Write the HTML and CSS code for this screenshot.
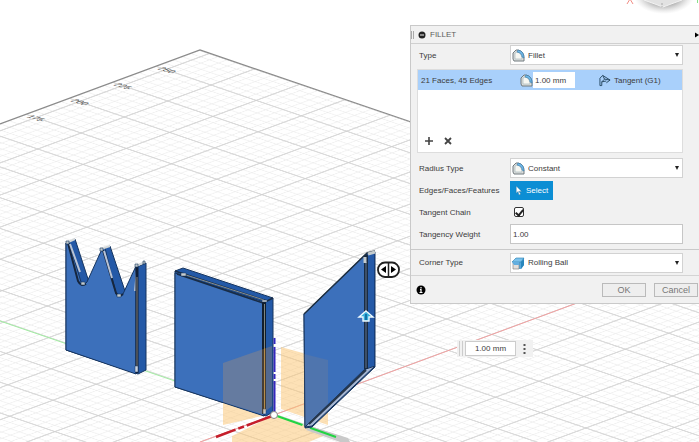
FILE: index.html
```html
<!DOCTYPE html>
<html lang="en">
<head>
<meta charset="utf-8">
<title>Fillet</title>
<link rel="stylesheet" href="styles.css">
</head>
<body>
<main class="viewport">
<svg class="scene" viewBox="0 0 699 442" preserveAspectRatio="xMinYMin slice" aria-hidden="true">
  <defs>
    <pattern id="grid" width="5" height="5" patternUnits="userSpaceOnUse" patternTransform="matrix(9.04 3.08 -8.66 3.2 211 85)">
      <path d="M1 0V5M2 0V5M3 0V5M4 0V5M0 1H5M0 2H5M0 3H5M0 4H5" stroke="#ececec" stroke-width=".1"/>
      <path d="M0 0H5M0 5H5M0 0V5M5 0V5" stroke="#d0d0d0" stroke-width=".16" fill="none"/>
    </pattern>
    <radialGradient id="shade"><stop offset=".5" stop-color="#999" stop-opacity=".8"/><stop offset="1" stop-color="#ccc" stop-opacity="0"/></radialGradient>
  </defs>
  <path d="M200 50L0 124V442H699V221Z" fill="url(#grid)"/>
  <path d="M0 124L200 50L420 125" fill="none" stroke="#8a8a8a" stroke-width="1.2"/>
  <g class="scale">
    <text transform="matrix(.94 .3 -.94 .35 157 69)">250</text>
    <text transform="matrix(.94 .3 -.94 .35 113 85)">225</text>
    <text transform="matrix(.94 .3 -.94 .35 70 101)">200</text>
    <text transform="matrix(.94 .3 -.94 .35 26 117)">175</text>
  </g>
  <path d="M0 321L309 427" stroke="#a2eda2"/>
  <path d="M200 442L274 415L577 303" stroke="#f2a0a0" fill="none"/>
  <ellipse cx="664" cy="-4" rx="30" ry="18" fill="url(#shade)"/>
  <path d="M643 -8L644 0L663 7L682 0L683 -8Z" fill="#e2e2e2" stroke="#f2f2f2"/>
  <path d="M662 3v2M662 6v1" stroke="#aaa"/>
  <path d="M627 4l3 -5l3 5" fill="none" stroke="#f08c84"/><path d="M697.500 0v3" stroke="#8ae08a"/>

  <path d="M281 347L328 360V425L281 409Z" fill="#fbc36d" fill-opacity=".5"/>
  <path d="M232 436L274 415L328 434L309 442H232Z" fill="#fbc36d" fill-opacity=".5"/>
  <path d="M310 426L348 438L350 442H340L306 430Z" fill="#c9c9c9"/>

  <g stroke="#163560" stroke-width="1" stroke-linejoin="round">
    <path d="M66 243L75 239L89 282L103 249L110 246L125 291L137 267L146 263V370L138 374L66 350Z" fill="#2459a7"/>
    <path d="M66 243L69 242L81 282Q83 287 87 282L102 249L105 248L116 294Q119 299 123 294L136 266V374L66 350Z" fill="#3c70bb"/>
    <path d="M68 243L78 281Q81 287 86 284M103 250L116 293Q119 298 123 294" fill="none" stroke="#16263e" stroke-width="2"/>
    <path d="M70 244L80 272M104 251L112 278M137 270L135 291" stroke="#b8c3d5" stroke-width="2"/>
    <path d="M137 267V373" stroke="#101e35" stroke-width="3"/>
    <path d="M137 277V371" stroke="#86827a" stroke-width="1"/>
    <path d="M66 243L75 239M101 249L110 246M136 266L145 262" stroke="#d4d9db" stroke-width="2"/>
    <path d="M66 241h3v3h-3zM100 248h3v3h-3zM135 264h3v3h-3zM143 261h2v3h-2zM81 282h4v3h-4zM117 294h4v3h-4z" fill="#c3cacd" stroke-width=".6"/>
    <path d="M135 366h3v6h-3z" fill="#ccd3de" stroke-width=".5"/>
  </g>
  <g stroke="#18365f" stroke-linejoin="round">
    <path d="M175 271L183 268L273 298V412L266 416L175 387Z" fill="#2359a7"/>
    <path d="M175 273L264 302V416L175 387Z" fill="#3c70bb"/>
    <path d="M175 271L267 301L273 298M177 274L263 303" fill="none" stroke="#182c46" stroke-width="1.5"/>
    <path d="M183 274L264 300" stroke="#a4aaa4" stroke-width=".8"/>
    <path d="M264 301V414" stroke="#111d2c" stroke-width="4"/>
    <path d="M264.500 304V348" stroke="#7d8580"/>
    <path d="M264.500 348V410" stroke="#a78a4b"/>
    <path d="M181 273h5v3h-5zM262 300h5v2h-5zM263 409h3v5h-3z" fill="#c6cdd1" stroke-width=".5"/>
    <path d="M223 363L272 346V406L262 414L223 402Z" fill="#df9d4f" fill-opacity=".25" stroke="none"/>
    <path d="M223 403L262 416L223 425Z" fill="#fbc36d" fill-opacity=".5" stroke="none"/>
  </g>
  <path d="M274.500 338V415" stroke="#3327bd" stroke-width="2" stroke-dasharray="6 3 25 2 5 2 40"/>
  <path d="M272 416L216 437" stroke="#c51e2b" stroke-width="2.500" stroke-dasharray="27 3 6 3"/>
  <path d="M277 416L336 437" stroke="#22d443" stroke-width="2" stroke-dasharray="27 8 30"/>
  <circle cx="274" cy="415" r="3.500" fill="#fff" stroke="#878787"/>

  <g stroke="#18365f" stroke-linejoin="round">
    <path d="M304 314L367 254L375 252V367L312 427L305 428Z" fill="#2459a7"/>
    <path d="M304 314L366 254V368L305 427Z" fill="#3c70bb"/>
    <path d="M304 354L328 360V404L305 427Z" fill="#df9d4f" fill-opacity=".12" stroke="none"/>
    <path d="M305 427L366 369L375 366L312 426Z" fill="#a5b6d3"/>
    <path d="M309 424L366 370" stroke="#26364b" stroke-width="2"/>
    <path d="M366 255V369" stroke="#182b44" stroke-width="4"/>
    <path d="M366 262V368" stroke="#63758a"/>
    <path d="M304 314L367 253L375 251" fill="none" stroke="#1f3042" stroke-width="1.500"/>
    <path d="M368 254L375 252M365 257v6" stroke="#c5ccce" stroke-width="3"/>
    <path d="M374.500 254V366" stroke="#173d78"/>
  </g>
  <path d="M366 311L373 317H369V321H363V317H359Z" fill="#39b0db" stroke="#eefaff" stroke-width="1.400"/>
  <path d="M366 314V320" stroke="#1475aa" stroke-width="2"/>
  <rect x="378" y="262.500" width="21" height="14.500" rx="7" fill="#fff" stroke="#202020" stroke-width="1.800"/>
  <path d="M388.500 263V277" stroke="#222" stroke-width="1.500"/><path d="M386 266v7l-5-3.500zM391 266v7l5-3.500z"/>
</svg>

<form class="dialog">
  <svg class="symbols" aria-hidden="true">
    <symbol id="fillet" viewBox="0 0 13 13"><path d="M4 1H6Q12 2 12 9V12H2L1 10V4Z" fill="#dedfdc" stroke="#717b80"/><path d="M3 4L5 3Q10 4 10 10H3Z" fill="#f7f7f2" stroke="#a8b8be" stroke-width=".7"/><path d="M6 1Q12 2 12 9L10 8Q10 4 5 3Z" fill="#6eb7e8" stroke="#397ba7" stroke-width=".6"/></symbol>
  </svg>
  <header class="titlebar">
    <span class="grip"></span>
    <svg class="dot" viewBox="0 0 8 8" aria-hidden="true"><circle cx="4" cy="4" r="3.500" fill="#222"/><path d="M2 4H6" stroke="#eee"/></svg>
    <h1>FILLET</h1>
    <svg class="expand" viewBox="0 0 5 6" aria-hidden="true"><path d="M0 0L5 3L0 6Z"/></svg>
  </header>
  <div class="row">
    <label for="type">Type</label>
    <div class="drop"><svg aria-hidden="true"><use href="#fillet"/></svg><select id="type"><option>Fillet</option></select></div>
  </div>
  <section class="selection">
    <div class="entry">
      <span>21 Faces, 45 Edges</span>
      <div class="radius"><svg aria-hidden="true"><use href="#fillet"/></svg><input aria-label="Radius" value="1.00 mm"></div>
      <div class="tangent"><svg viewBox="0 0 13 13" aria-hidden="true"><path d="M1 12V4L4 1L6 5L3 8V12ZM4 1L12 6L8 9M6 5L12 6M3 8L8 7" fill="none" stroke="#25455e"/></svg>Tangent (G1)</div>
    </div>
    <div class="tools">
      <button type="button" aria-label="Add"><svg viewBox="0 0 8 8"><path d="M4 0V8M0 4H8" stroke="#444" stroke-width="1.600"/></svg></button>
      <button type="button" aria-label="Remove"><svg viewBox="0 0 8 8"><path d="M1 1L7 7M7 1L1 7" stroke="#444" stroke-width="1.800"/></svg></button>
    </div>
  </section>
  <div class="row">
    <label for="radius-type">Radius Type</label>
    <div class="drop"><svg aria-hidden="true"><use href="#fillet"/></svg><select id="radius-type"><option>Constant</option></select></div>
  </div>
  <div class="row">
    <label for="pick">Edges/Faces/Features</label>
    <button class="pick" id="pick" type="button"><svg viewBox="0 0 7 10" aria-hidden="true"><path d="M1 0V8L3 6L4 10L6 9L4 6H7Z" fill="#fff" stroke="#246b91" stroke-width=".4"/></svg>Select</button>
  </div>
  <div class="row">
    <label for="chain">Tangent Chain</label>
    <input class="check" id="chain" type="checkbox" checked>
  </div>
  <div class="row">
    <label for="weight">Tangency Weight</label>
    <input class="field" id="weight" value="1.00">
  </div>
  <div class="row corner">
    <label for="corner">Corner Type</label>
    <div class="drop"><svg viewBox="0 0 13 13" aria-hidden="true"><path d="M1 6L4 1H12V8L9 12H1Z" fill="#55a8dc"/><path d="M1 6H7V12H1Z" fill="#e2dfdc" stroke="#777" stroke-width=".6"/><path d="M0 5L4 1H12L9 5Z" fill="#7cc2ec" stroke="#267daf" stroke-width=".6"/><path d="M9 5L12 2V8L9 12Z" fill="#2986bd"/><path d="M0 5H7V8H2Z" fill="#62aee0"/></svg><select id="corner"><option>Rolling Ball</option></select></div>
  </div>
  <footer class="actions">
    <svg class="info" viewBox="0 0 10 10" role="img" aria-label="Information"><circle cx="5" cy="5" r="4.500"/><path d="M5 2V3.500M4 4.500H5V7.500M3.500 7.500H6.500" stroke="#fff" stroke-width="1.200" fill="none"/></svg>
    <button type="button">OK</button><button type="button">Cancel</button>
  </footer>
</form>

<div class="value">
  <span class="handle"></span><input aria-label="Fillet radius" value="1.00 mm">
  <button type="button" aria-label="More"><svg viewBox="0 0 3 10"><path d="M1.500 0V2M1.500 4V6M1.500 8V10" stroke="#555" stroke-width="2"/></svg></button>
</div>
</main>
</body>
</html>
```

FILE: styles.css
```css
* { box-sizing: border-box; }
body { margin: 0; background: #fff; color: #3c3c3c; font-family: "Liberation Sans", Arial, sans-serif; font-size: 8px; }
button, input, select { font: inherit; color: inherit; margin: 0; padding: 0; border-radius: 0; }
.viewport { position: relative; min-height: 100vh; overflow: hidden; }
.scene { position: absolute; inset: 0; width: 100%; height: 100%; }
.scale text { font-size: 9px; fill: #444; }
.symbols { position: absolute; width: 0; height: 0; }

.dialog { position: absolute; top: 25px; left: 410px; right: 0; background: #f1f1f1; border: 1px solid #c9c9c9; border-right: 0; }
.titlebar { display: flex; align-items: center; gap: 4px; height: 18px; border-bottom: 1px solid #d0d0d0; }
.titlebar h1 { flex: 1; margin: 0; font-size: 8px; font-weight: normal; color: #5c5c5c; }
.grip { width: 3px; height: 8px; border-left: 1px solid #aaa; border-right: 1px solid #aaa; }
.dot { width: 8px; height: 8px; }
.expand { width: 4px; height: 6px; }

.row { display: grid; grid-template-columns: 91px 1fr; align-items: center; min-height: 22px; padding: 0 16px 0 8px; }
.drop { position: relative; height: 20px; }
.drop::after { content: ""; position: absolute; right: 4px; top: 8px; border: 2px solid transparent; border-top: 4px solid #222; border-bottom: 0; }
.drop svg { position: absolute; left: 2px; top: 4px; width: 13px; height: 13px; }
.drop select { appearance: none; width: 100%; height: 20px; padding-left: 17px; background: #fff; border: 1px solid #d2d2d2; }
.field { width: 100%; height: 20px; padding: 0 2px; background: #fff; border: 1px solid #c6c6c6; }

.selection { display: flex; flex-direction: column; justify-content: space-between; height: 84px; margin: 3px 16px 4px 6px; background: #fff; border: 1px solid #ddd; }
.entry { display: grid; grid-template-columns: 99px 1fr 83px; align-items: center; height: 20px; padding-left: 3px; background: #a9d0fb; }
.radius { display: flex; align-items: center; }
.radius svg { width: 13px; height: 13px; }
.radius input { width: 42px; height: 16px; padding: 0 2px; border: 0; background: #fff; }
.tangent { display: flex; align-items: center; gap: 3px; white-space: nowrap; }
.tangent svg { width: 12px; height: 13px; }
.tools { display: flex; gap: 11px; padding: 7px; }
.tools button { display: flex; width: 8px; height: 8px; background: none; border: 0; }

.pick { display: flex; align-items: center; gap: 4px; width: 43px; height: 19px; padding-left: 5px; background: #0c8ed4; border: 0; color: #fff; }
.pick svg { width: 7px; height: 9px; }
.check { appearance: none; display: grid; place-items: center; width: 10px; height: 10px; margin-left: 4px; background: #fff; border: 1px solid #333; border-radius: 2px; }
.check:checked::before { content: ""; width: 3px; height: 6px; border: solid #222; border-width: 0 2px 2px 0; transform: rotate(40deg); }
.corner { min-height: 27px; margin-top: 4px; border-top: 1px solid #c9c9c9; border-bottom: 1px solid #d4d4d4; }

.actions { display: flex; align-items: center; gap: 8px; height: 27px; padding: 0 1px 0 5px; }
.info { width: 10px; height: 10px; margin-right: auto; }
.actions button { width: 44px; height: 14px; background: #eee; border: 1px solid #bababa; color: #777; font-size: 9px; line-height: 10px; }

.value { position: absolute; left: 457px; top: 340px; display: flex; align-items: center; height: 17px; background: #f1f1f1; }
.handle { width: 4px; height: 15px; margin: 0 2px; border-left: 1px solid #ccc; border-right: 1px solid #ccc; }
.value input { width: 51px; height: 15px; text-align: center; background: #fff; border: 1px solid #ccc; }
.value button { display: grid; place-items: center; width: 17px; height: 15px; background: none; border: 0; }
.value svg { width: 3px; height: 10px; }
```
